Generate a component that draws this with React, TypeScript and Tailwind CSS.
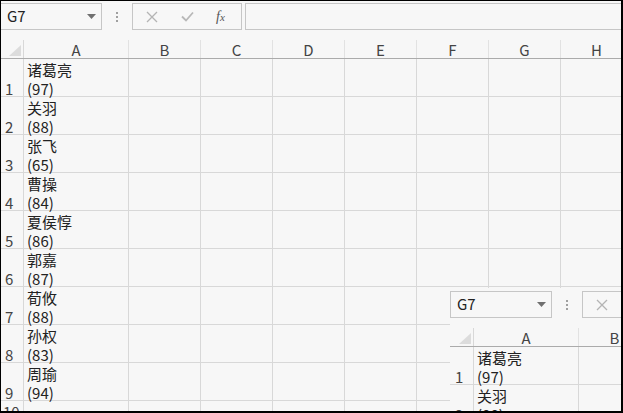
import React from 'react'

const people = [
  { name: '诸葛亮', score: 97 },
  { name: '关羽', score: 88 },
  { name: '张飞', score: 65 },
  { name: '曹操', score: 84 },
  { name: '夏侯惇', score: 86 },
  { name: '郭嘉', score: 87 },
  { name: '荀攸', score: 88 },
  { name: '孙权', score: 83 },
  { name: '周瑜', score: 94 },
]

const otherCols = ['B', 'C', 'D', 'E', 'F', 'G', 'H']

const font = { fontFamily: '"Noto Sans CJK SC", "Noto Sans", sans-serif' }

function Toolbar() {
  return (
    <div className="flex h-[40px] items-start pt-[3px]">
      <div className="flex h-[27px] w-[102px] shrink-0 items-center justify-between border border-[#c6c6c6] pl-[6px] pr-[5px] text-[15px] text-[#222]">
        <span>G7</span>
        <svg width="9" height="5" viewBox="0 0 9 5">
          <path d="M0 0h9L4.5 5z" fill="#707070" />
        </svg>
      </div>
      <div className="flex h-[27px] w-[30px] shrink-0 flex-col items-center justify-center gap-[2px]">
        <span className="h-[2px] w-[2px] bg-[#a0a0a0]" />
        <span className="h-[2px] w-[2px] bg-[#a0a0a0]" />
        <span className="h-[2px] w-[2px] bg-[#a0a0a0]" />
      </div>
      <div className="flex h-[27px] w-[110px] shrink-0 items-center border border-[#c6c6c6]">
        <svg className="ml-[13px]" width="12" height="12" viewBox="0 0 12 12">
          <path d="M1 1l10 10M11 1L1 11" stroke="#b4b4b4" strokeWidth="1.3" />
        </svg>
        <svg className="ml-[23px]" width="13" height="11" viewBox="0 0 13 11">
          <path d="M1 5.5l4 4L12 1.5" stroke="#b8b8b8" strokeWidth="1.8" fill="none" />
        </svg>
        <span
          className="ml-[22px] text-[14px] italic text-[#555]"
          style={{ fontFamily: '"Liberation Serif", serif' }}
        >
          f<span className="text-[11px]">x</span>
        </span>
      </div>
      <div className="ml-[3px] h-[27px] flex-1 border border-[#c6c6c6]" />
    </div>
  )
}

function Sheet() {
  return (
    <div className="w-[623px] bg-[#f7f7f7] text-[#222]" style={font}>
      <Toolbar />
      <div className="flex h-[19px] border-b border-[#ababab]">
        <div className="relative w-[24px] shrink-0 border-r border-[#d8d8d8]">
          <svg className="absolute left-[9px] top-[5px]" width="12" height="11" viewBox="0 0 12 11">
            <path d="M12 0v11H0z" fill="#dcdcdc" />
          </svg>
        </div>
        <div className="flex w-[105px] shrink-0 items-center justify-center border-r border-[#e2e2e2] pt-[1px] text-[15px] leading-none text-[#444]">
          A
        </div>
        {otherCols.map((c) => (
          <div
            key={c}
            className="flex w-[72px] shrink-0 items-center justify-center border-r border-[#e2e2e2] pt-[1px] text-[15px] leading-none text-[#444]"
          >
            {c}
          </div>
        ))}
      </div>
      {people.map((p, i) => (
        <div key={i} className="flex h-[38px] border-b border-[#d8d8d8]">
          <div className="w-[24px] shrink-0 border-r border-[#d8d8d8] pl-[5px] pt-[20px] text-[15px] leading-[19px] text-[#444]">
            {i + 1}
          </div>
          <div className="flex w-[105px] shrink-0 flex-col border-r border-[#d8d8d8] pl-[3px] pt-[1px] text-[15px] leading-[19px]">
            <span>{p.name}</span>
            <span>({p.score})</span>
          </div>
          {otherCols.map((c) => (
            <div key={c} className="w-[72px] shrink-0 border-r border-[#d8d8d8]" />
          ))}
        </div>
      ))}
      <div className="flex h-[19px] border-b border-[#d8d8d8]">
        <div className="w-[24px] shrink-0 border-r border-[#d8d8d8] pl-[3px] pt-[1px] text-[15px] leading-[19px] text-[#444]">
          10
        </div>
        <div className="w-[105px] shrink-0 border-r border-[#d8d8d8]" />
        {otherCols.map((c) => (
          <div key={c} className="w-[72px] shrink-0 border-r border-[#d8d8d8]" />
        ))}
      </div>
    </div>
  )
}

export default function App() {
  return (
    <div className="relative h-[413px] w-[623px] overflow-hidden bg-[#f7f7f7]">
      <Sheet />
      <div className="absolute left-[450px] top-[288px] h-[125px] w-[173px] overflow-hidden">
        <Sheet />
      </div>
      <div className="pointer-events-none absolute inset-0 border-b-2 border-l border-r-2 border-t border-black" />
    </div>
  )
}
